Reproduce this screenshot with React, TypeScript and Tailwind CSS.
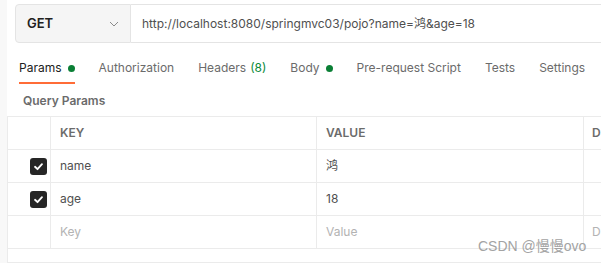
import React from 'react';

type Param = { key: string; value: string };

const params: Param[] = [
  { key: 'name', value: '鸿' },
  { key: 'age', value: '18' },
];

function CheckBox() {
  return (
    <div className="ml-[22px] w-[17px] h-[17px] rounded-[3px] bg-[#262626] flex items-center justify-center">
      <svg width="11" height="11" viewBox="0 0 12 12" fill="none">
        <path d="M2.2 6.3 L4.9 8.9 L9.8 3.4" stroke="#fff" strokeWidth="2" strokeLinecap="round" strokeLinejoin="round" />
      </svg>
    </div>
  );
}

function Dot() {
  return <span className="ml-[6px] inline-block w-[7px] h-[7px] rounded-full bg-[#0a7f35]" />;
}

const tabs = [
  { label: 'Params', dot: true, active: true },
  { label: 'Authorization' },
  { label: 'Headers', count: '(8)' },
  { label: 'Body', dot: true },
  { label: 'Pre-request Script' },
  { label: 'Tests' },
  { label: 'Settings' },
];

export default function App() {
  return (
    <div className="relative w-[601px] h-[263px] overflow-hidden bg-white flex font-['Inter','Noto_Sans_CJK_SC',sans-serif]">
      <div className="w-[7px] shrink-0 bg-[#f8f8f8]" />

      <div className="flex-1 min-w-0">
        {/* URL bar */}
        <div className="h-[48px] pt-[4px] pl-[8px] flex">
          <div className="h-[39px] w-[116px] shrink-0 bg-[#f5f5f5] border border-[#e4e4e4] rounded-l-[4px] flex items-center justify-between pl-[11px] pr-[11px]">
            <span className="text-[13px] font-semibold text-[#212121]">GET</span>
            <svg width="10" height="6" viewBox="0 0 10 6" fill="none">
              <path d="M1 1 L5 5 L9 1" stroke="#8a8a8a" strokeWidth="1" />
            </svg>
          </div>
          <div className="flex-1 h-[39px] border-y border-[#e4e4e4] flex items-center pl-[11px] text-[12px] text-[#505050] whitespace-nowrap">
            http://localhost:8080/springmvc03/pojo?name=鸿&amp;age=18
          </div>
        </div>

        {/* Tabs */}
        <div className="flex gap-[24px] pl-[12px] h-[36px]">
          {tabs.map((t) => (
            <div
              key={t.label}
              className={`flex items-center pt-[11px] pb-[5px] border-b-2 text-[12px] whitespace-nowrap ${
                t.active ? 'border-[#ff6c37] text-[#212121]' : 'border-transparent text-[#6b6b6b]'
              }`}
            >
              <span className="leading-[18px]">{t.label}</span>
              {t.count && <span className="ml-[4px] text-[#0a8a3a]">{t.count}</span>}
              {t.dot && <Dot />}
            </div>
          ))}
        </div>

        {/* Query Params */}
        <div className="mt-[9px] mb-[7px] pl-[16px] h-[16px] leading-[16px] text-[12px] font-semibold text-[#6b6b6b]">
          Query Params
        </div>

        {/* Table */}
        <div className="border-t border-l border-[#ebebeb] text-[12px]">
          <div className="flex h-[33px] border-b border-[#ebebeb]">
            <div className="w-[43px] shrink-0 border-r border-[#ebebeb]" />
            <div className="w-[266px] shrink-0 border-r border-[#ebebeb] pl-[9px] flex items-center font-semibold text-[#6b6b6b]">KEY</div>
            <div className="w-[267px] shrink-0 border-r border-[#ebebeb] pl-[9px] flex items-center font-semibold text-[#6b6b6b]">VALUE</div>
            <div className="flex-1 pl-[8px] flex items-center font-semibold text-[#6b6b6b]">D</div>
          </div>
          {params.map((p) => (
            <div key={p.key} className="flex h-[33px] border-b border-[#ebebeb]">
              <div className="w-[43px] shrink-0 border-r border-[#ebebeb] flex items-center">
                <CheckBox />
              </div>
              <div className="w-[266px] shrink-0 border-r border-[#ebebeb] pl-[9px] flex items-center text-[#505050]">{p.key}</div>
              <div className="w-[267px] shrink-0 border-r border-[#ebebeb] pl-[9px] flex items-center text-[#505050]">{p.value}</div>
              <div className="flex-1" />
            </div>
          ))}
          <div className="flex h-[33px] border-b border-[#ebebeb]">
            <div className="w-[43px] shrink-0 border-r border-[#ebebeb]" />
            <div className="w-[266px] shrink-0 border-r border-[#ebebeb] pl-[9px] flex items-center text-[#b3b3b3]">Key</div>
            <div className="w-[267px] shrink-0 border-r border-[#ebebeb] pl-[9px] flex items-center text-[#b3b3b3]">Value</div>
            <div className="flex-1 pl-[8px] flex items-center text-[#b3b3b3]">D</div>
          </div>
          <div className="h-[14px] border-b border-[#ebebeb]" />
        </div>
      </div>

      {/* watermark */}
      <div className="absolute left-[478px] top-[236px] text-[14px] leading-[20px] text-[#a3a3a3] font-['Liberation_Sans','Noto_Sans_CJK_SC',sans-serif] whitespace-nowrap">
        CSDN @慢慢ovo
      </div>
    </div>
  );
}
